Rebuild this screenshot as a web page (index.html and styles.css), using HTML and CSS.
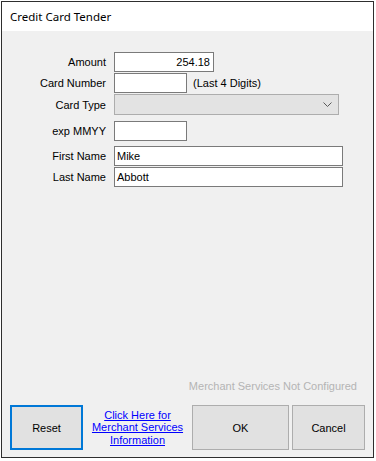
FILE: index.html
```html
<!DOCTYPE html>
<html>
<head>
<meta charset="utf-8">
<link rel="stylesheet" href="styles.css">
</head>
<body>
<div class="window">
  <div class="titlebar">Credit Card Tender</div>
  <div class="content">
    <div class="form">
      <div class="row">
        <label class="lbl">Amount</label>
        <div class="input amount">254.18</div>
      </div>
      <div class="row">
        <label class="lbl">Card Number</label>
        <div class="input short"></div>
        <span class="hint">(Last 4 Digits)</span>
      </div>
      <div class="row row-select">
        <label class="lbl">Card Type</label>
        <div class="select">
          <svg class="chev" width="9" height="5" viewBox="0 0 9 5"><polyline points="0.5,0.5 4.5,4.5 8.5,0.5" fill="none" stroke="#5a5a5a" stroke-width="1"/></svg>
        </div>
      </div>
      <div class="row row-exp">
        <label class="lbl">exp MMYY</label>
        <div class="input short"></div>
      </div>
      <div class="row row-first">
        <label class="lbl">First Name</label>
        <div class="input wide">Mike</div>
      </div>
      <div class="row">
        <label class="lbl">Last Name</label>
        <div class="input wide">Abbott</div>
      </div>
    </div>
    <div class="spacer"></div>
    <div class="status">Merchant Services Not Configured</div>
    <div class="footer">
      <div class="btn reset">Reset</div>
      <div class="linkbox"><a class="link" href="#">Click Here for<br>Merchant Services<br>Information</a></div>
      <div class="btn ok">OK</div>
      <div class="btn cancel">Cancel</div>
    </div>
  </div>
</div>
</body>
</html>
```

FILE: styles.css
```css
html, body {
  margin: 0;
  padding: 0;
  background: #ffffff;
}
body {
  font-family: "Liberation Sans", Arial, sans-serif;
  font-size: 11px;
  color: #000;
}
.window {
  margin: 1px 0 0 1px;
  width: 371px;
  height: 455px;
  border: 1px solid #2e2e2e;
  display: flex;
  flex-direction: column;
  background: #f0f0f0;
}
.titlebar {
  height: 29px;
  background: #ffffff;
  font-family: "Noto Sans", "Open Sans", sans-serif;
  font-size: 11.5px;
  line-height: 29px;
  padding-left: 8px;
  color: #000;
}
.content {
  flex: 1;
  display: flex;
  flex-direction: column;
}
.form {
  padding-top: 21px;
  display: flex;
  flex-direction: column;
  gap: 1px;
}
.row {
  display: flex;
  align-items: center;
  height: 20px;
}
.row-select { height: 21px; }
.row-exp { margin-top: 5px; }
.row-first { margin-top: 4px; }
.lbl {
  width: 104px;
  margin-right: 8px;
  text-align: right;
  white-space: nowrap;
}
.input {
  box-sizing: border-box;
  height: 20px;
  background: #fff;
  border: 1px solid #7a7a7a;
  line-height: 18px;
  padding: 0 2px;
  white-space: nowrap;
}
.amount { width: 100px; text-align: right; padding-right: 3px; }
.short { width: 73px; }
.wide { width: 229px; }
.hint { margin-left: 6px; }
.select {
  box-sizing: border-box;
  width: 225px;
  height: 21px;
  background: #e3e3e3;
  border: 1px solid #adadad;
  display: flex;
  align-items: center;
  justify-content: flex-end;
  padding-right: 6px;
}
.chev { display: block; }
.spacer { flex: 1; }
.status {
  height: 13px;
  line-height: 13px;
  text-align: right;
  padding-right: 16px;
  color: #b4b4b4;
  margin-bottom: 12px;
}
.footer {
  display: flex;
  height: 45px;
  padding: 0 8px 7px 8px;
}
.btn {
  box-sizing: border-box;
  background: #e1e1e1;
  border: 1px solid #adadad;
  display: flex;
  align-items: center;
  justify-content: center;
  height: 45px;
}
.reset { width: 73px; border: 2px solid #0078d7; }
.linkbox {
  width: 109px;
  display: flex;
  align-items: center;
  justify-content: center;
  text-align: center;
}
.link {
  color: #0000ff;
  text-decoration: underline;
  line-height: 12.5px;
}
.ok { width: 97px; }
.cancel { width: 73px; margin-left: 3px; }
```
